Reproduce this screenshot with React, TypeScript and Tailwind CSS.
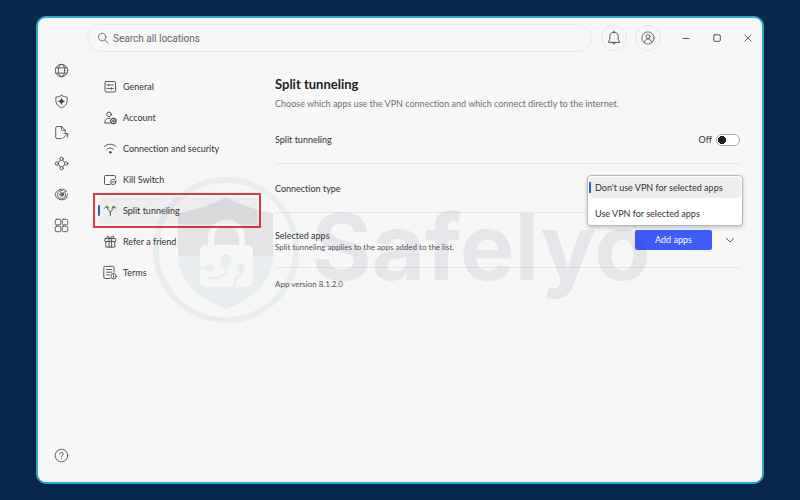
import React, { useState } from "react";

type IconProps = { children: React.ReactNode; className?: string };

function Icon({ children, className = "size-4" }: IconProps) {
  return (
    <svg
      viewBox="0 0 16 16"
      className={`shrink-0 ${className}`}
      fill="none"
      stroke="#444"
      strokeWidth="0.9"
      strokeLinecap="round"
      strokeLinejoin="round"
      aria-hidden="true"
    >
      {children}
    </svg>
  );
}

const railItems = [
  {
    label: "Locations",
    icon: (
      <>
        <circle cx="8" cy="8" r="6.6" />
        <ellipse cx="8" cy="8" rx="3.4" ry="6.6" />
        <path d="M2 5.200h12M2 10.800h12" />
      </>
    ),
  },
  {
    label: "Threat protection",
    icon: (
      <>
        <path d="M8 1.400c1.700 1.200 3.600 1.800 6 1.800v4c0 3.600-2.400 6-6 7.500-3.600-1.500-6-3.900-6-7.500v-4c2.400 0 4.300-.6 6-1.800Z" />
        <path d="m8 4.600.9 2.300 2.300.9-2.300.9L8 11l-.9-2.300-2.300-.9 2.300-.9Z" fill="#333" />
      </>
    ),
  },
  {
    label: "File sharing",
    icon: (
      <>
        <path d="M7.500 14.500H3.200A1.400 1.400 0 0 1 1.800 13.100V3A1.400 1.400 0 0 1 3.200 1.600h5l3.800 3.800V7.500" />
        <path d="M8 1.600v3c0 .6.400 1 1 1h2.800M9.500 14.200l4.900-4.900M10.700 9h3.900v3.900" />
      </>
    ),
  },
  {
    label: "Meshnet",
    icon: (
      <>
        <circle cx="8" cy="3" r="1.800" />
        <circle cx="8" cy="13" r="1.800" />
        <circle cx="3" cy="8" r="1.800" />
        <circle cx="13" cy="8" r="1.800" />
        <path d="M6.600 4.600C6.300 6 6 6.300 4.600 6.600M9.400 4.600c.300 1.400.6 1.700 2 2M4.600 9.400c1.400.300 1.700.6 2 2M11.400 9.400c-1.400.300-1.700.6-2 2" />
      </>
    ),
  },
  {
    label: "Dark web monitor",
    icon: (
      <>
        <path d="M14.300 10.700c-1.500 2-3.700 3-6.300 3C4.500 13.700 2 11.200 1.200 8 2.200 4.600 5 2.400 8.300 2.400c2.200 0 4 .9 5.200 2.200" />
        <path d="M12 6.200A4.400 4.400 0 1 1 9 3.800M14.500 7.200c.1 1.800-.8 2.800-2.200 3.300" />
        <circle cx="8.200" cy="8" r="2" />
        <path d="m8.200 8 4.300-3.800" />
        <circle cx="8.200" cy="8" r=".7" fill="#333" />
      </>
    ),
  },
  {
    label: "Products",
    icon: (
      <>
        <rect x="1.400" y="1.400" width="5.800" height="5.800" rx="1.200" />
        <rect x="8.800" y="1.400" width="5.800" height="5.800" rx="1.200" />
        <rect x="1.400" y="8.800" width="5.800" height="5.800" rx="1.200" />
        <rect x="8.800" y="8.800" width="5.800" height="5.800" rx="1.200" />
      </>
    ),
  },
];

const menuItems = [
  {
    label: "General",
    icon: (
      <>
        <rect x="3" y="2.500" width="10.500" height="10.500" rx="1.200" />
        <path d="M5 6h6.500M5 9.500h6.500M6.800 5.200v1.600M9.500 8.700v1.600" strokeWidth=".8" />
      </>
    ),
  },
  {
    label: "Account",
    icon: (
      <>
        <circle cx="7" cy="4.300" r="2.300" />
        <path d="M7.500 13H2.800c0-2.900 1.500-4.600 4.900-4.600" />
        <circle cx="11.300" cy="11" r="2.700" strokeWidth="1.200" />
        <circle cx="11.300" cy="11" r=".8" />
      </>
    ),
  },
  {
    label: "Connection and security",
    icon: (
      <>
        <path d="M2.400 5.500c3.300-3.100 8.400-3.100 11.700 0M4.900 8.400c2-1.800 4.700-1.800 6.700 0" />
        <circle cx="8.300" cy="11.300" r=".9" fill="#444" />
      </>
    ),
  },
  {
    label: "Kill Switch",
    icon: (
      <>
        <path d="M8 12.500H3.700A1.200 1.200 0 0 1 2.500 11.300V4.700a1.200 1.200 0 0 1 1.200-1.200h8.600a1.200 1.200 0 0 1 1.200 1.200v1.600" />
        <circle cx="11.200" cy="10" r="2.600" />
        <path d="M10.200 10h2" />
      </>
    ),
  },
  {
    label: "Split tunneling",
    icon: (
      <>
        <path d="M8.300 12.800V9.200c0-1.700-3.600-2.200-3.600-5.800M8.300 9.200c0-1.700 3.600-2.200 3.600-5.800" />
        <path d="M2.800 5.200 4.700 3.100l2.100 1.900M9.800 5l2.100-1.900 1.900 2.100" />
      </>
    ),
  },
  {
    label: "Refer a friend",
    icon: (
      <>
        <rect x="2.800" y="4.500" width="11" height="3" rx=".6" />
        <path d="M3.800 7.500v5.600h9V7.500M7 4.500v8.600M9.600 4.500v8.600M8.300 4.300C7.300 1.900 4.900 1.500 4.900 3.100c0 .9.900 1.400 3.400 1.400 2.500 0 3.400-.5 3.400-1.400C11.700 1.500 9.300 1.900 8.300 4.300Z" />
      </>
    ),
  },
  {
    label: "Terms",
    icon: (
      <>
        <path d="M7.800 13.500H3.200A1.400 1.400 0 0 1 1.800 12.100V2.700A1.400 1.400 0 0 1 3.200 1.300h7.400A1.400 1.400 0 0 1 12 2.700v4.600M4.500 4.500h5M4.500 7.200h5M4.500 9.900h2.800" />
        <circle cx="11.500" cy="11.300" r="2.700" />
        <path d="M11.500 11.200v1.300M11.500 10v.1" />
      </>
    ),
  },
];

function TitleBar() {
  return (
    <header className="flex items-center pt-1.5 pl-[49px]">
      <label className="flex h-7 flex-1 items-center gap-1 rounded-full border border-[#e8e9ea] pl-[9px]">
        <Icon className="size-3">
          <circle cx="6.800" cy="6.800" r="5" />
          <path d="m10.600 10.600 4.400 4.400" />
        </Icon>
        <input
          type="text"
          aria-label="Search all locations"
          placeholder="Search all locations"
          className="min-w-0 flex-1 bg-transparent font-[Roboto,sans-serif] text-[10px] text-[#666] outline-none placeholder:text-[#666]"
        />
      </label>
      <button type="button" aria-label="Notifications" className="ml-[9px] flex size-[26px] items-center justify-center rounded-full border border-[#e6e7e8]">
        <Icon>
          <path d="M8 2.200c-2.500 0-4.200 1.800-4.200 4.200v3L2.300 12.400h11.400l-1.500-3v-3C12.200 4 10.500 2.200 8 2.200ZM8 1v1M6.500 12.600c.2 1.900 2.800 1.900 3 0" />
        </Icon>
      </button>
      <button type="button" aria-label="Profile" className="ml-2 flex size-[26px] items-center justify-center rounded-full border border-[#e6e7e8]">
        <Icon className="size-3.5">
          <circle cx="8" cy="8" r="7" />
          <circle cx="8" cy="6.300" r="2.300" />
          <path d="M4 13.200c0-2.600 1.500-4 4-4s4 1.400 4 4" />
        </Icon>
      </button>
      <div className="ml-[11px] flex gap-[3px]">
        <button type="button" aria-label="Minimize" className="flex size-7 items-center justify-center">
          <Icon><path d="M5 8.500h6" /></Icon>
        </button>
        <button type="button" aria-label="Maximize" className="flex size-7 items-center justify-center">
          <Icon><rect x="4.800" y="4.800" width="6.500" height="6.500" rx="1" /></Icon>
        </button>
        <button type="button" aria-label="Close" className="flex size-7 items-center justify-center">
          <Icon><path d="m4.800 5 6.200 6.200M11 5l-6.200 6.200" /></Icon>
        </button>
      </div>
    </header>
  );
}

function Rail() {
  return (
    <nav aria-label="Main" className="flex w-[47px] shrink-0 flex-col items-center pt-[3px] pb-[11px]">
      {railItems.map((item) => (
        <button key={item.label} type="button" aria-label={item.label} className="flex h-[31px] w-full items-center justify-center">
          <Icon className="size-[15px]">{item.icon}</Icon>
        </button>
      ))}
      <button type="button" aria-label="Help" className="mt-auto flex h-[31px] w-full items-center justify-center">
        <Icon className="size-[15px]">
          <circle cx="8" cy="8" r="6.700" />
          <path d="M6.200 6.500c0-2.400 3.700-2.400 3.700 0C9.900 7.900 8 7.800 8 9.300M8 11.200v.1" />
        </Icon>
      </button>
    </nav>
  );
}

function SettingsMenu({ current, onSelect }: { current: string; onSelect: (label: string) => void }) {
  return (
    <nav aria-label="Settings" className="ml-[13px] flex w-[159px] shrink-0 flex-col gap-1 pt-[21px]">
      {menuItems.map((item) => {
        const active = item.label === current;
        return (
          <button
            key={item.label}
            type="button"
            aria-current={active ? "page" : undefined}
            onClick={() => onSelect(item.label)}
            className={`relative flex h-[27px] items-center gap-[5px] rounded-sm pl-1 text-[9px] ${active ? "bg-black/4" : ""}`}
          >
            {active && (
              <>
                <span className="absolute top-2 left-0 h-[11px] w-0.5 rounded-full bg-[#3556f0]" />
                <span className="absolute -inset-y-1 -right-1 -left-[5px] border-2 border-[#e03c3f]" />
              </>
            )}
            <Icon>{item.icon}</Icon>
            {item.label}
          </button>
        );
      })}
    </nav>
  );
}

function Content() {
  const [enabled, setEnabled] = useState(false);
  return (
    <main className="ml-[18px] flex min-w-0 flex-1 flex-col pt-6 pr-[21px]">
      <h1 className="text-[13px] leading-4 font-bold text-[#222]">Split tunneling</h1>
      <p className="mt-1 text-[9px] leading-4 text-[#707070]">
        Choose which apps use the VPN connection and which connect directly to the internet.
      </p>
      <div className="mt-1 flex h-12 items-center justify-between border-b border-[#e6e8e9] text-[9px]">
        <label htmlFor="split">Split tunneling</label>
        <span className="flex items-center gap-1">
          {enabled ? "On" : "Off"}
          <input
            id="split"
            type="checkbox"
            role="switch"
            checked={enabled}
            onChange={(e) => setEnabled(e.target.checked)}
            className="mr-px h-3 w-6 appearance-none rounded-full border border-[#aaa] bg-white bg-[radial-gradient(circle_at_5px_5px,#222_4px,transparent_4px)] checked:bg-[radial-gradient(circle_at_17px_5px,#3556f0_4px,transparent_4px)]"
          />
        </span>
      </div>
      <div className="relative flex h-[49px] items-center border-b border-[#e6e8e9] pt-0.5 text-[9px]">
        <label htmlFor="type">Connection type</label>
        <select
          id="type"
          size={2}
          defaultValue="bypass"
          className="absolute top-[11px] -right-0.5 z-20 h-[51px] w-[156px] appearance-none overflow-hidden rounded-sm border border-[#b8b8b8] bg-white bg-none p-px text-[9px] shadow-[0_2px_4px_#0003] outline-none"
        >
          <option
            value="bypass"
            className="flex h-[21px] items-center rounded-sm px-0 pl-1.5 text-[#333] checked:bg-[linear-gradient(#3556f0,#3556f0),linear-gradient(#ededed,#ededed)] checked:bg-[length:2px_11px,100%_100%] checked:bg-[position:0_center,0_0] checked:bg-no-repeat"
          >
            Don't use VPN for selected apps
          </option>
          <option value="only" className="mt-[5px] flex h-[21px] items-center px-0 pl-1.5 text-[#333]">
            Use VPN for selected apps
          </option>
        </select>
      </div>
      <div className="flex h-[55px] items-center border-b border-[#e6e8e9]">
        <div className="flex-1 pt-0.5">
          <h2 className="text-[9px] leading-3">Selected apps</h2>
          <p className="text-[8px] leading-[10px] text-[#555]">Split tunneling applies to the apps added to the list.</p>
        </div>
        <button type="button" className="h-5 w-[77px] rounded-xs bg-[#3d5cff] text-[9px] text-white">Add apps</button>
        <button type="button" aria-label="Show selected apps" className="mr-[3px] ml-2.5 flex size-4 items-center justify-center">
          <Icon><path d="m4.500 6.500 3.500 3.500 3.500-3.500" /></Icon>
        </button>
      </div>
      <p className="mt-2 text-[8px] leading-4 text-[#555]">App version 8.1.2.0</p>
    </main>
  );
}

function Watermark() {
  return (
    <div aria-hidden="true" className="pointer-events-none absolute inset-0 z-10 flex items-center justify-center gap-3 overflow-hidden pl-1">
      <svg viewBox="152 177 146 146" className="size-[146px] shrink-0">
        <defs>
          <mask id="lock-cutout">
            <rect x="152" y="177" width="146" height="146" fill="#fff" />
            <path d="M210 250v-12a15 15 0 0 1 31 0v12" fill="none" stroke="#000" strokeWidth="6" />
            <rect x="199" y="245" width="53" height="42" rx="6" fill="#000" />
            <g fill="#fff" stroke="#fff" strokeWidth="3">
              <circle cx="225" cy="261" r="4.500" />
              <path d="M225 264v9l-7 5h-12M240 268v6l-6 5v6l-8 5" fill="none" />
              <circle cx="240" cy="267" r="2.500" />
              <circle cx="209" cy="268" r="2.500" />
              <path d="M190 268h19" fill="none" />
            </g>
          </mask>
        </defs>
        <circle cx="225" cy="250" r="70" fill="none" stroke="#2a86a0" strokeWidth="6" opacity=".07" />
        <g mask="url(#lock-cutout)">
          <path d="M225 197c14 8 30 13 47 16v43h-95v-43c17-3 33-8 48-16Z" fill="#1f2148" opacity=".09" />
          <path d="M177 256h95c0 24-18 42-47 53-29-11-48-29-48-53Z" fill="#2a86a0" opacity=".07" />
        </g>
      </svg>
      <span className="pb-1.5 font-[Inter,sans-serif] text-[92px] leading-none font-bold text-[#1f2158]/8">Safelyo</span>
    </div>
  );
}

export default function App() {
  const [page, setPage] = useState("Split tunneling");
  return (
    <div className="flex min-h-screen bg-[#06254a] px-9 py-4 font-[Lato,'Open_Sans',sans-serif] text-[#333] [font-variant-ligatures:none]">
      <div className="relative flex flex-1 flex-col rounded-[10px] border-2 border-[#29abc6] bg-[#f7f7f7]">
        <TitleBar />
        <div className="flex flex-1">
          <Rail />
          <SettingsMenu current={page} onSelect={setPage} />
          <Content />
        </div>
        <Watermark />
      </div>
    </div>
  );
}
